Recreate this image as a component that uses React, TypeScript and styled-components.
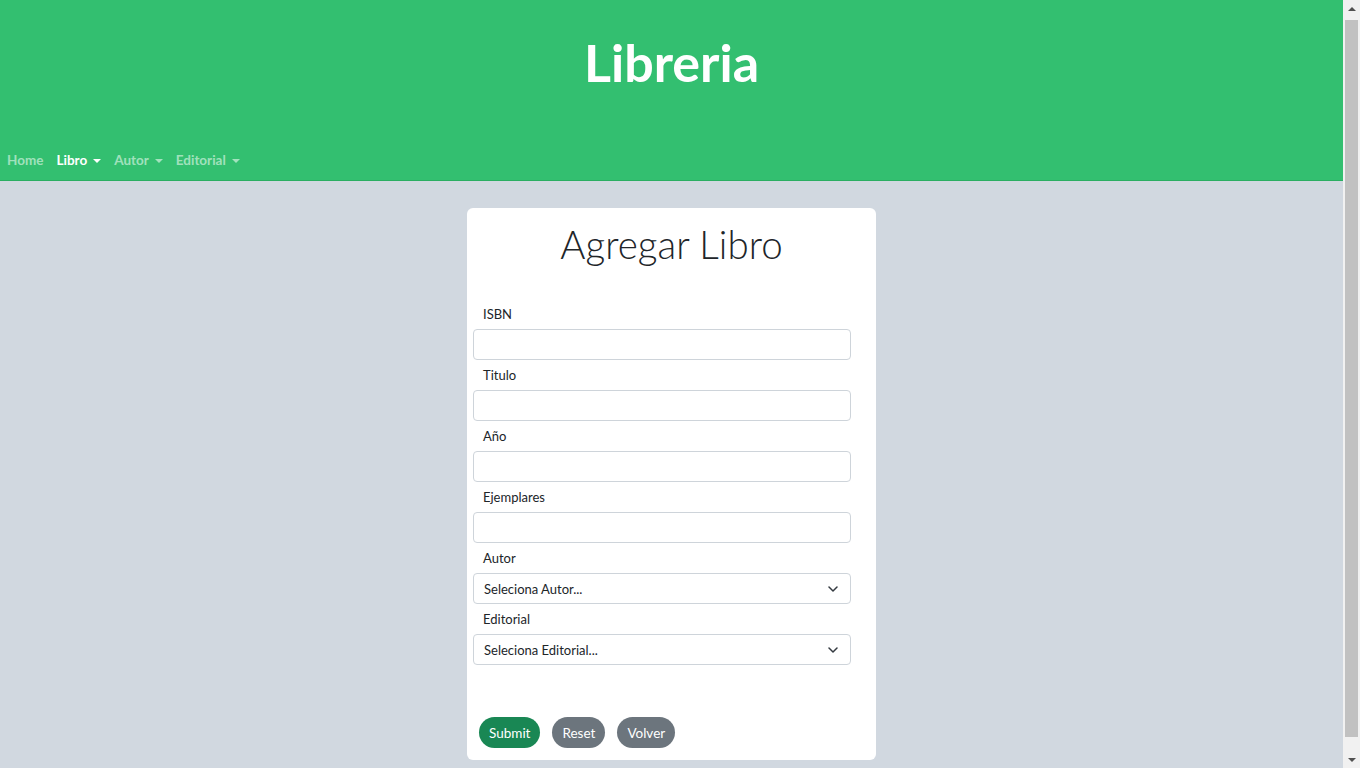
import styled, { createGlobalStyle } from 'styled-components';

const green = '#33bf70';
const pageBg = '#d1d8e0';

const GlobalStyle = createGlobalStyle`
	* {
		box-sizing: border-box;
	}
	body {
		margin: 0;
		background-color: ${pageBg};
		font-family: Lato, 'Open Sans', sans-serif;
		color: #212529;
		overflow: hidden;
	}
`;

const Shell = styled.div`
	display: flex;
	height: 100vh;
`;

const Page = styled.div`
	flex: 1;
	min-width: 0;
`;

// drawn stand-in for the browser's classic scrollbar
const ScrollTrack = styled.aside`
	align-items: center;
	background-color: #f1f1f1;
	display: flex;
	flex-direction: column;
	height: 100vh;
	padding: 7px 0 6px;
	width: 17px;
`;

const ScrollThumb = styled.div`
	background-color: #c1c1c1;
	flex: 1;
	margin: 9px 0 21px;
	width: 13px;
`;

const Arrow = styled.span<{ $down?: boolean }>`
	border-left: 4px solid transparent;
	border-right: 4px solid transparent;
	${p => (p.$down ? 'border-top: 4px solid #505050;' : 'border-bottom: 4px solid #505050;')}
	height: 0;
	width: 0;
`;

const Header = styled.header`
	background-color: ${green};
	border-bottom: 1px solid #2aae62;
	display: flex;
	flex-direction: column;
`;

const TitleBox = styled.div`
	height: 141px;
	padding-top: 37px;
	text-align: center;
`;

const Title = styled.h1`
	color: #ffffff;
	font-size: 52px;
	font-weight: 700;
	line-height: 50px;
	margin: 0;
`;

const Nav = styled.nav`
	align-items: center;
	display: flex;
	gap: 13px;
	height: 39px;
	padding-bottom: 1px;
	padding-left: 7px;
`;

const NavItem = styled.a<{ $active?: boolean }>`
	align-items: center;
	color: ${p => (p.$active ? '#ffffff' : 'rgba(255, 255, 255, 0.55)')};
	cursor: pointer;
	display: flex;
	font-size: 13.5px;
	font-weight: 700;
	gap: 6px;
`;

const Caret = styled.span`
	border-left: 4px solid transparent;
	border-right: 4px solid transparent;
	border-top: 4px solid currentColor;
	display: inline-block;
	height: 0;
	margin-top: 1px;
	width: 0;
`;

const Main = styled.main`
	display: flex;
	justify-content: center;
	padding: 27px 0 13px;
`;

const Card = styled.div`
	background-color: #ffffff;
	border-radius: 6px;
	display: flex;
	flex-direction: column;
	padding: 12px 25px 12px 6px;
	width: 409px;
`;

const CardTitle = styled.h2`
	font-size: 38.5px;
	font-weight: 300;
	line-height: 48px;
	margin: 0 -19px 36px 0;
	text-align: center;
`;

const Field = styled.div`
	display: flex;
	flex-direction: column;
	margin-bottom: 5px;
`;

const Label = styled.label`
	font-size: 13px;
	line-height: 20px;
	margin-bottom: 5px;
	padding-left: 10px;
`;

const Input = styled.input`
	background: #ffffff;
	border: 1px solid #ced4da;
	border-radius: 4px;
	font-family: inherit;
	font-size: 13px;
	height: 31px;
	padding: 0 10px;
	width: 100%;
`;

const SelectBox = styled.div`
	align-items: center;
	border: 1px solid #ced4da;
	border-radius: 4px;
	display: flex;
	font-size: 13px;
	height: 31px;
	justify-content: space-between;
	padding: 0 12px 0 10px;
	width: 100%;
`;

const Buttons = styled.div`
	display: flex;
	gap: 12px;
	margin-top: 47px;
	padding-left: 6px;
`;

const PillButton = styled.button<{ $variant: 'success' | 'secondary' }>`
	background-color: ${p => (p.$variant === 'success' ? '#198754' : '#6c757d')};
	border: none;
	border-radius: 16px;
	color: #ffffff;
	font-family: inherit;
	font-size: 13.5px;
	height: 31px;
	padding: 0 10px;
`;

const Chevron = () => (
	<svg width="10" height="6" viewBox="0 0 10 6">
		<path d="M1 1 5 5 9 1" fill="none" stroke="#343a40" strokeWidth="1.5" strokeLinecap="round" strokeLinejoin="round" />
	</svg>
);

const fields = ['ISBN', 'Titulo', 'Año', 'Ejemplares'];
const selects = [
	{ label: 'Autor', placeholder: 'Seleciona Autor...' },
	{ label: 'Editorial', placeholder: 'Seleciona Editorial...' }
];

const App = () => {
	return (
		<Shell>
			<GlobalStyle />
			<Page>
				<Header>
					<TitleBox>
						<Title>Libreria</Title>
					</TitleBox>
					<Nav>
						<NavItem>Home</NavItem>
						<NavItem $active>
							Libro
							<Caret />
						</NavItem>
						<NavItem>
							Autor
							<Caret />
						</NavItem>
						<NavItem>
							Editorial
							<Caret />
						</NavItem>
					</Nav>
				</Header>
				<Main>
					<Card>
						<CardTitle>Agregar Libro</CardTitle>
						{fields.map(name => (
							<Field key={name}>
								<Label>{name}</Label>
								<Input type="text" />
							</Field>
						))}
						{selects.map(s => (
							<Field key={s.label}>
								<Label>{s.label}</Label>
								<SelectBox>
									<span>{s.placeholder}</span>
									<Chevron />
								</SelectBox>
							</Field>
						))}
						<Buttons>
							<PillButton $variant="success">Submit</PillButton>
							<PillButton $variant="secondary">Reset</PillButton>
							<PillButton $variant="secondary">Volver</PillButton>
						</Buttons>
					</Card>
				</Main>
			</Page>
			<ScrollTrack>
				<Arrow />
				<ScrollThumb />
				<Arrow $down />
			</ScrollTrack>
		</Shell>
	);
};

export default App;
